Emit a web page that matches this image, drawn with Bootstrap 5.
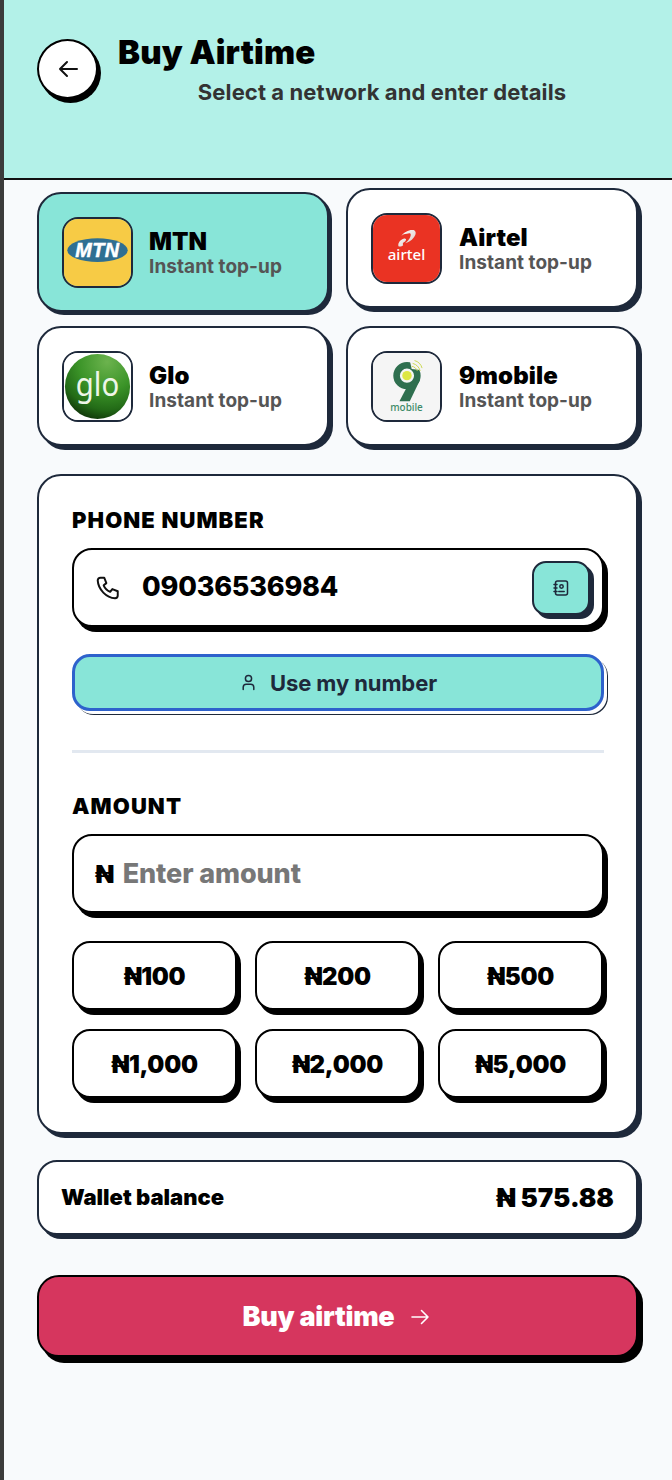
<!DOCTYPE html>
<html lang="en"><head><meta charset="utf-8"><title>Buy Airtime</title>
<link href="https://cdn.jsdelivr.net/npm/bootstrap@5.3.0/dist/css/bootstrap.min.css" rel="stylesheet">
<style>
html,body{height:100%}
body{background:#f8fafc;border-left:4px solid #3b3b3b;font-family:Inter,"Liberation Sans",sans-serif;color:#000;min-height:1480px}
.hdr{height:180px;background:#b3f1e8;border-bottom:2px solid #111;padding:39px 26px 0 33px}
.backb{width:61px;height:60px;flex:none;border-radius:50%;border:2.5px solid #000;background:#fff;box-shadow:3px 4px 0 #000;margin-right:20px}
.ttl{font-size:33px;font-weight:900;line-height:1;margin:-3px 0 0;letter-spacing:.1px}
.subt{font-size:22px;font-weight:700;color:#333;margin:9px 0 0;line-height:28px;letter-spacing:.1px}
.wrap{padding:8px 34px 0 33px}
.netgrid{display:grid;grid-template-columns:292px 292px;column-gap:17px;row-gap:18px}
.net{height:120px;border:2px solid #1e293b;border-radius:24px;background:#fff;box-shadow:4px 4px 0 #1e293b;padding:0 23px;gap:16px}
.net.sel{background:#88e5d8;transform:translateY(4px);box-shadow:3px 3px 0 #1e293b}
.logo{width:71px;height:71px;border:2px solid #1e293b;border-radius:16px;overflow:hidden;flex:none;display:block}
.ntxt{padding-top:3px}
.ntxt.rcol{margin-left:1px}
.nname{font-size:24px;font-weight:900;line-height:26px;letter-spacing:.1px}
.nsub{font-size:19px;font-weight:700;color:#555;line-height:24px;letter-spacing:.05px}
.panel{margin-top:28px;border:2px solid #1e293b;border-radius:24px;background:#fff;box-shadow:4px 4px 0 #1e293b;padding:31px 32px 34px 33px}
.lbl{font-size:22px;font-weight:900;letter-spacing:1.100px;line-height:26px;margin:0 0 15px;display:block}
.fld{height:79px;border:2px solid #000;border-radius:20px;background:#fff;box-shadow:4px 5px 0 #000;padding:0 12px 0 21px}
.fld input{border:0;outline:0;background:transparent;padding:0;min-width:0;flex:1;font-family:inherit;color:#000}
.phone{font-size:27px;font-weight:800;letter-spacing:-.2px;margin-left:21px}
.fld .amt{font-size:27px;font-weight:800;margin-left:9px;letter-spacing:-.1px;padding-top:2px}
.amt::placeholder{color:#777;opacity:1}
.naira{font-size:25px;font-weight:900;line-height:1;padding-top:2px}
.cbtn{width:58px;height:54px;flex:none;border:2px solid #1e293b;border-radius:14px;background:#88e5d8;box-shadow:4px 4px 0 #1e293b;padding:0}
.usem{height:57px;margin-top:27px;width:100%;border:3px solid #2e62cc;border-radius:18px;background:#88e5d8;box-shadow:3px 3px 0 #fff,4px 4px 0 #1e293b;color:#1e293b;font-size:22px;font-weight:700;gap:14px;letter-spacing:-.1px;padding-left:14px}
.usem:hover{background:#88e5d8;color:#1e293b;border-color:#2e62cc}
.usem span{padding-top:1px}
.rule{height:3px;background:#e2e8f0;margin:39px 0 40px}
.chips{display:grid;grid-template-columns:repeat(3,165px);column-gap:18px;row-gap:19px;margin-top:28px}
.chip{height:69px;border:2px solid #000;border-radius:18px;background:#fff;box-shadow:4px 5px 0 #000;font-size:24px;font-weight:900;color:#000;padding:2px 0 0;letter-spacing:-.3px}
.wal{margin-top:26px;height:75px;border:2px solid #1e293b;border-radius:20px;background:#fff;box-shadow:4px 4px 0 #1e293b;padding:0 22px}
.wall{font-size:22px;font-weight:900}
.walv{font-size:26px;font-weight:900}
.buy{margin-top:40px;width:100%;height:82px;border:2px solid #000;border-radius:22px;background:#d6365e;box-shadow:5px 6px 0 #000;color:#fff;font-size:27px;font-weight:900;gap:16px;letter-spacing:-.3px;padding:2px 14px 0 12px}
.buy:hover{background:#d6365e;color:#fff;border-color:#000}
</style></head>
<body>
<header class="hdr d-flex align-items-start">
  <button class="backb btn d-flex align-items-center justify-content-center p-0" aria-label="Back">
    <svg width="24" height="24" viewBox="0 0 24 24" fill="none" stroke="#111" stroke-width="2" stroke-linecap="round" stroke-linejoin="round"><path d="M21 12H4M11 5l-7 7 7 7"/></svg>
  </button>
  <div class="flex-grow-1">
    <h1 class="ttl">Buy Airtime</h1>
    <p class="subt text-center">Select a network and enter details</p>
  </div>
</header>
<main class="wrap">
  <div class="netgrid">
    <div class="net sel d-flex align-items-center">
      <svg class="logo" viewBox="0 0 71 71"><rect width="71" height="71" fill="#f7cb45"/><ellipse cx="35.500" cy="33" rx="32" ry="12.500" fill="#2f6f92"/><text x="35.500" y="40" text-anchor="middle" font-family="Liberation Sans" font-weight="700" font-style="italic" font-size="21" fill="#fff" stroke="#fff" stroke-width=".5" letter-spacing=".5">MTN</text></svg>
      <div class="ntxt"><div class="nname">MTN</div><div class="nsub">Instant top-up</div></div>
    </div>
    <div class="net d-flex align-items-center">
      <svg class="logo" viewBox="0 0 71 71"><defs><linearGradient id="sw" x1="0" y1="0" x2="1" y2="1"><stop offset="0" stop-color="#fff"/><stop offset="1" stop-color="#d9c9c4"/></linearGradient></defs><rect width="71" height="71" fill="#ea3323"/><path d="M27 33c-1-3 2-7 6-8 2 0 3 1 1 3-2 1-3 2-2 4-1 1-4 2-5 1zM30 22c3-4 9-7 13-6 3 1 3 5 0 8-2 3-6 5-9 6 3-2 6-6 6-9 0-2-2-2-4-1-3 0-4 1-6 2z" fill="url(#sw)"/><text x="35.500" y="48" text-anchor="middle" font-family="Noto Sans" font-weight="500" font-size="16" fill="#fff">airtel</text></svg>
      <div class="ntxt rcol"><div class="nname">Airtel</div><div class="nsub">Instant top-up</div></div>
    </div>
    <div class="net d-flex align-items-center">
      <svg class="logo" viewBox="0 0 71 71"><defs><radialGradient id="gl" cx=".65" cy=".12" r=".98"><stop offset="0" stop-color="#6cb34e"/><stop offset=".45" stop-color="#3b9428"/><stop offset=".75" stop-color="#236b17"/><stop offset="1" stop-color="#0a2505"/></radialGradient></defs><rect width="71" height="71" fill="#fff"/><circle cx="35.500" cy="35.500" r="34.500" fill="url(#gl)"/><text x="35.500" y="46" text-anchor="middle" font-family="Noto Sans" font-weight="400" font-size="34" fill="#eef6e8" textLength="46" lengthAdjust="spacingAndGlyphs">glo</text></svg>
      <div class="ntxt"><div class="nname">Glo</div><div class="nsub">Instant top-up</div></div>
    </div>
    <div class="net d-flex align-items-center">
      <svg class="logo" viewBox="0 0 71 71"><rect width="71" height="71" fill="#f5f5f5"/><circle cx="36" cy="24" r="11" fill="none" stroke="#2f6f4f" stroke-width="7"/><path d="M50 28L39 51H28L37.500 33z" fill="#2f6f4f"/><path d="M39 8L41 17 50 18 52 8z" fill="#f5f5f5"/><circle cx="36" cy="24" r="5" fill="#dde744"/><path d="M41 14c3 .5 5 2.500 6 5M42 11c4 1 7 4 8 8M44 8c4 1 7 4 8 8" fill="none" stroke="#c9d84a" stroke-width="1"/><text x="35.500" y="61" text-anchor="middle" font-family="Noto Sans" font-weight="500" font-size="10.500" fill="#3d8a68">mobile</text></svg>
      <div class="ntxt rcol"><div class="nname">9mobile</div><div class="nsub">Instant top-up</div></div>
    </div>
  </div>

  <section class="panel">
    <label class="lbl" for="ph">PHONE NUMBER</label>
    <div class="fld d-flex align-items-center">
      <svg width="26" height="26" viewBox="0 0 24 24" fill="none" stroke="#111" stroke-width="1.800" stroke-linecap="round" stroke-linejoin="round"><path d="M5 2.500h3.500l2 5-2.500 2c1 2.500 3.500 5 6 6l2-2.500 5 2V19c0 1.500-1 2.500-2.500 2.500C10.500 21 3 13.500 2.500 5 2.500 3.500 3.500 2.500 5 2.500z"/></svg>
      <input id="ph" class="phone" value="09036536984">
      <button class="cbtn btn d-flex align-items-center justify-content-center" aria-label="Contacts">
        <svg width="18" height="18" viewBox="0 0 18 18" fill="none" stroke="#1e293b" stroke-width="1.500" stroke-linecap="round" stroke-linejoin="round"><rect x="3.500" y="2" width="12" height="14" rx="2"/><circle cx="9.500" cy="7.500" r="1.700"/><path d="M6.800 12.500h5.400M2 5.500h3M2 9h3M2 12.500h3"/></svg>
      </button>
    </div>
    <button class="usem btn d-flex align-items-center justify-content-center">
      <svg width="15" height="19" viewBox="0 0 17 20" fill="none" stroke="#1e293b" stroke-width="1.700" stroke-linecap="round"><circle cx="8.500" cy="5.500" r="3.500"/><path d="M2.500 18v-2.500c0-2 1.500-3.500 3.500-3.500h5c2 0 3.500 1.500 3.500 3.500V18"/></svg>
      <span>Use my number</span>
    </button>
    <div class="rule"></div>
    <label class="lbl" for="am">AMOUNT</label>
    <div class="fld d-flex align-items-center">
      <span class="naira">₦</span>
      <input id="am" class="amt" placeholder="Enter amount">
    </div>
    <div class="chips">
      <button class="chip btn">₦100</button><button class="chip btn">₦200</button><button class="chip btn">₦500</button>
      <button class="chip btn">₦1,000</button><button class="chip btn">₦2,000</button><button class="chip btn">₦5,000</button>
    </div>
  </section>

  <div class="wal d-flex align-items-center justify-content-between">
    <span class="wall">Wallet balance</span><span class="walv">₦ 575.88</span>
  </div>

  <button class="buy btn d-flex align-items-center justify-content-center">
    <span>Buy airtime</span>
    <svg width="20" height="20" viewBox="0 0 20 20" fill="none" stroke="#fff" stroke-width="1.600" stroke-linecap="round" stroke-linejoin="round"><path d="M2 10h16M11.500 3.500L18 10l-6.500 6.500"/></svg>
  </button>
</main>
<script src="https://cdn.jsdelivr.net/npm/bootstrap@5.3.0/dist/js/bootstrap.bundle.min.js"></script>
</body></html>
